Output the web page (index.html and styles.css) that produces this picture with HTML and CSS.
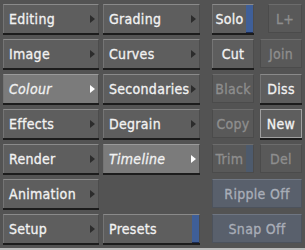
FILE: index.html
```html
<!DOCTYPE html>
<html>
<head>
  <title>Tools</title>
  <link rel="stylesheet" href="styles.css">
</head>
<body>
  <div class="panel">
    <div class="col menu">
      <div class="btn">Editing<span class="arrow"></span></div>
      <div class="btn">Image<span class="arrow"></span></div>
      <div class="btn active">Colour<span class="arrow"></span></div>
      <div class="btn">Effects<span class="arrow"></span></div>
      <div class="btn">Render<span class="arrow"></span></div>
      <div class="btn">Animation<span class="arrow"></span></div>
      <div class="btn">Setup<span class="arrow"></span></div>
    </div>

    <div class="col sub">
      <div class="btn">Grading<span class="arrow"></span></div>
      <div class="btn">Curves<span class="arrow"></span></div>
      <div class="btn">Secondaries<span class="arrow"></span></div>
      <div class="btn">Degrain<span class="arrow"></span></div>
      <div class="btn active">Timeline<span class="arrow"></span></div>
      <div class="spacer"></div>
      <div class="btn strip-btn"><span class="label left">Presets</span><span class="strip"></span></div>
    </div>

    <div class="tools">
      <div class="btn tool strip-btn"><span class="label">Solo</span><span class="strip"></span></div>
      <div class="btn tool off narrow">L+</div>
      <div class="btn tool">Cut</div>
      <div class="btn tool off">Join</div>
      <div class="btn tool off">Black</div>
      <div class="btn tool">Diss</div>
      <div class="btn tool off">Copy</div>
      <div class="btn tool lit">New</div>
      <div class="btn tool off strip-btn"><span class="label">Trim</span><span class="strip dim"></span></div>
      <div class="btn tool off">Del</div>
      <div class="btn tool toggle wide">Ripple Off</div>
      <div class="btn tool toggle wide">Snap Off</div>
    </div>
  </div>
  <div class="footer"></div>
</body>
</html>
```

FILE: styles.css
```css
body {
  margin: 0;
  background: #535353;
  font-family: "DejaVu Sans Condensed", "DejaVu Sans", sans-serif;
  font-size: 14px;
  color: #f2f2f2;
  width: 305px;
  height: 250px;
  overflow: hidden;
}
.panel {
  display: flex;
  padding: 4px 0 0 3px;
}
.col {
  display: flex;
  flex-direction: column;
  gap: 6px;
}
.menu {
  width: 96px;
  margin-right: 4px;
}
.sub {
  width: 97px;
  margin-right: 12px;
}
.spacer {
  height: 29px;
}
.btn {
  height: 29px;
  box-sizing: border-box;
  display: flex;
  align-items: center;
  justify-content: space-between;
  padding: 0 3px 0 5px;
  background: #5e5e5e;
  border-top: 1px solid #8a8a8a;
  border-left: 1px solid #747474;
  border-right: 1px solid #4c4c4c;
  box-shadow: 0 2px 0 #1c1c1c;
  -webkit-text-stroke: 0.3px #f2f2f2;
  letter-spacing: 0.3px;
  white-space: nowrap;
}
.arrow {
  width: 0;
  height: 0;
  border-left: 5px solid #2c2c2c;
  border-top: 4px solid transparent;
  border-bottom: 4px solid transparent;
}
.active {
  background: #7b7b7b;
  border-top-color: #9a9a9a;
  font-style: italic;
}
.active .arrow {
  border-left-color: #ffffff;
}
.strip-btn {
  padding: 0;
}
.label {
  flex: 1;
  text-align: center;
}
.label.left {
  text-align: left;
  padding-left: 5px;
}
.strip {
  width: 7px;
  align-self: stretch;
  background: #3f5f98;
  border-bottom: 1px solid #1d2c52;
}
.strip.dim {
  background: #4d5a6c;
  border-bottom: none;
}
.tools {
  display: grid;
  grid-template-columns: 42px 42px;
  grid-auto-rows: 29px;
  column-gap: 6px;
  row-gap: 6px;
}
.tool {
  justify-content: center;
  padding: 0;
}
.off {
  color: #8e8e8e;
  -webkit-text-stroke: 0.3px #8e8e8e;
  background: #595959;
  border: 1px solid #4b4b4b;
  border-top-color: #6c6c6c;
  box-shadow: none;
}
.narrow {
  margin-left: 8px;
}
.lit {
  border: 1px solid #a0a0a0;
}
.toggle {
  background: #59606c;
  color: #a9aeb8;
  -webkit-text-stroke: 0.3px #a9aeb8;
  border: 1px solid #4c525c;
  border-top-color: #6f7682;
  box-shadow: none;
}
.wide {
  grid-column: span 2;
}
.footer {
  margin-top: 5px;
  height: 2px;
  background: #bdbdbd;
}
```
